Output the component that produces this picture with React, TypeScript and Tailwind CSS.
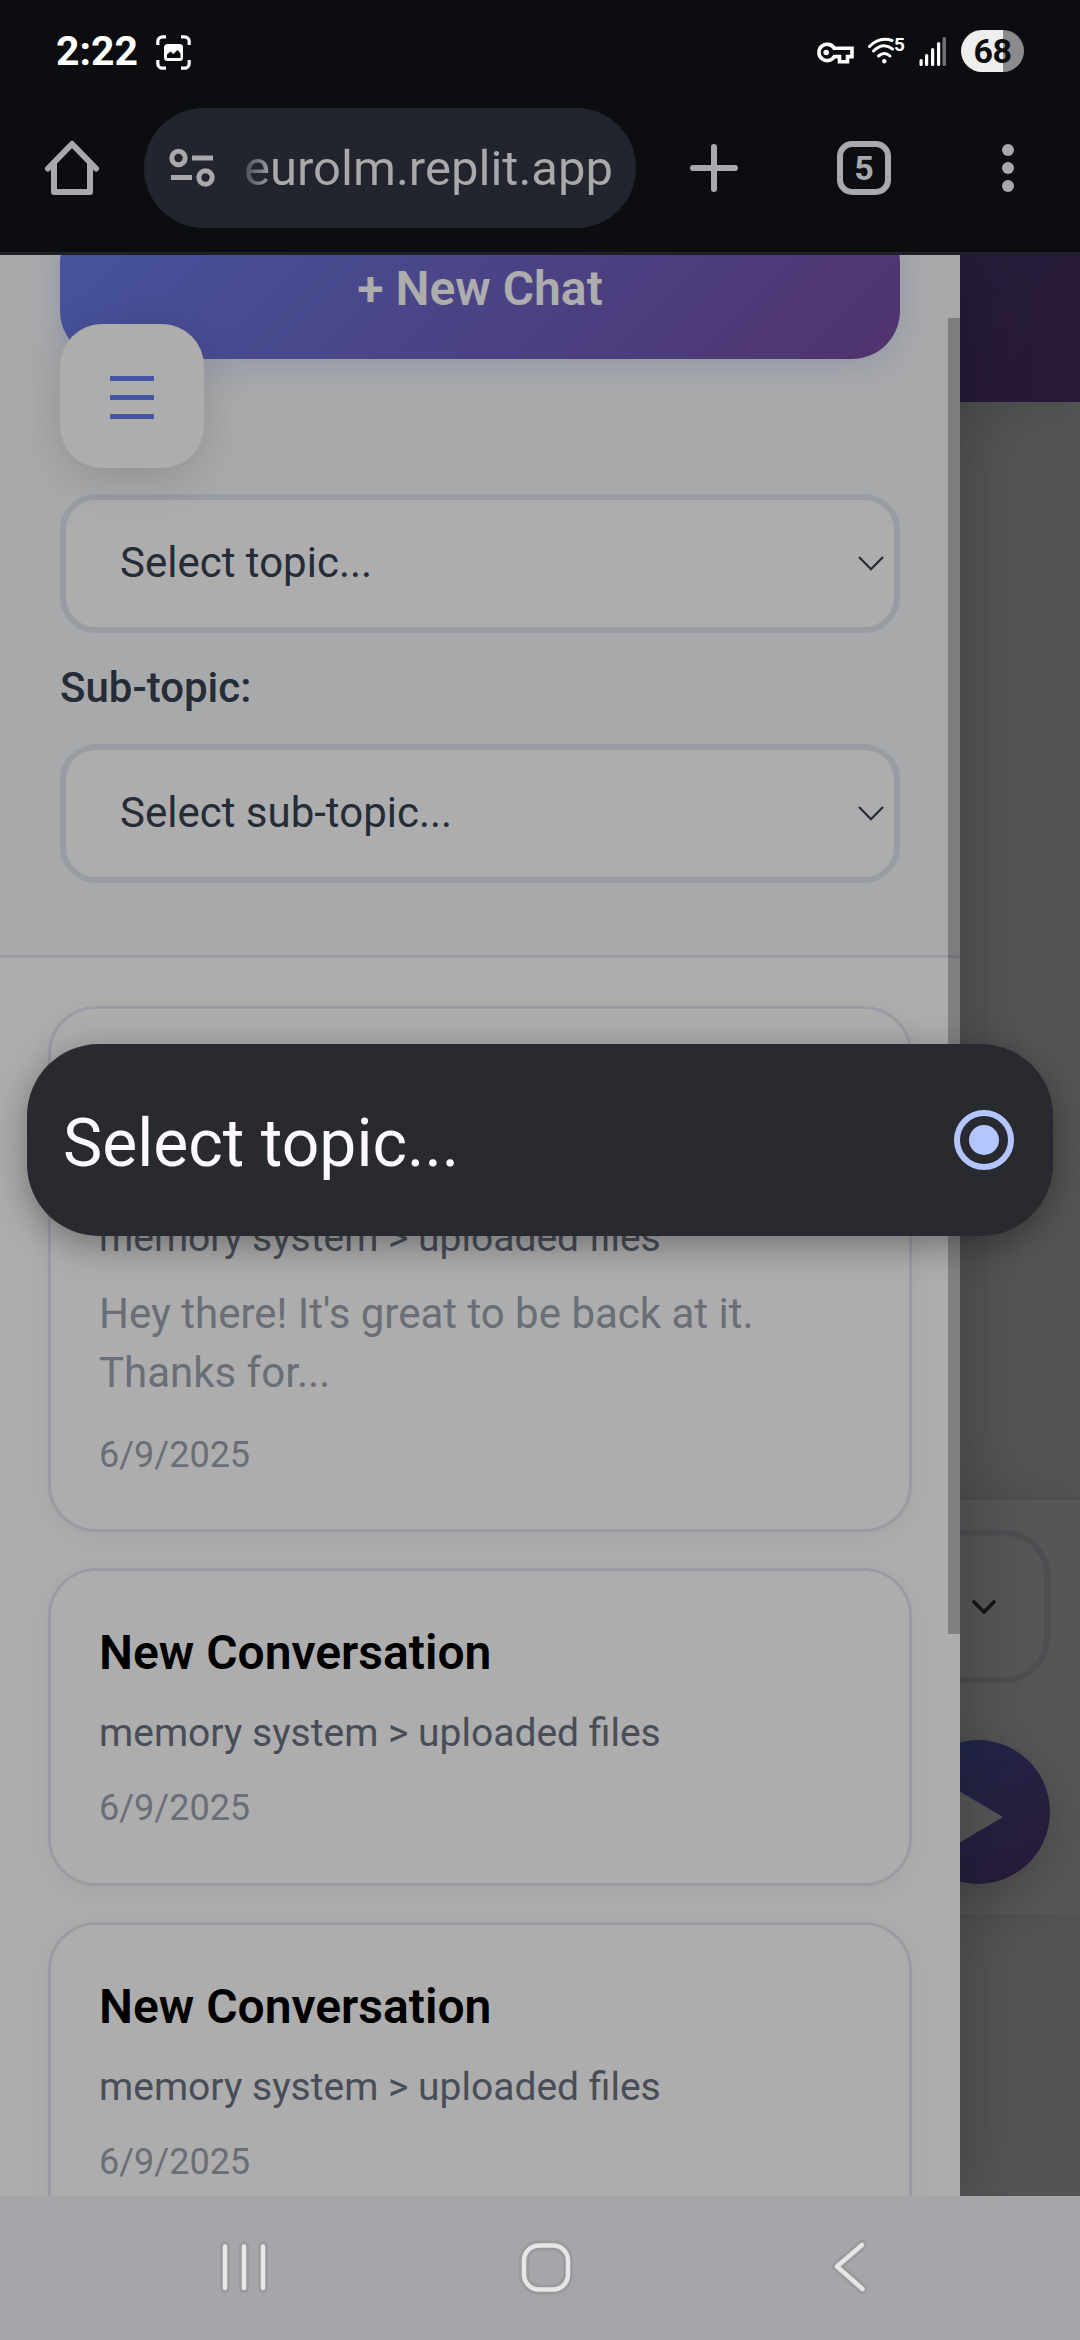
import React from "react";

function StatusBar() {
  return (
    <div className="flex h-[108px] items-start pl-[56px] pr-[56px] text-white">
      <div className="mt-[27px] w-[100px] text-[41px] leading-[48px] font-bold">2:22</div>
      <svg className="mt-[35px]" width="35" height="35" viewBox="0 0 35 35" fill="none">
        <path d="M1.800 10V6.500a4.700 4.700 0 0 1 4.700-4.700H10M25 1.800h3.500a4.700 4.700 0 0 1 4.700 4.700V10M33.200 25v3.500a4.700 4.700 0 0 1-4.700 4.700H25M10 33.200H6.500a4.700 4.700 0 0 1-4.700-4.700V25" stroke="#fff" strokeWidth="3.200" />
        <rect x="8" y="9" width="19" height="17" rx="3.500" fill="#fff" />
        <path d="M11 23v-3.500l3.500-3 3 2.500 4-4 3 3.500V23z" fill="#0b0d10" />
      </svg>
      <div className="ml-auto flex items-start">
        <svg className="mt-[42px]" width="38" height="22" viewBox="0 0 38 22" fill="none" stroke="#fff" strokeWidth="3.600">
          <path d="M18.200 6.300A8.200 8.200 0 1 0 18.200 14.600H23.500V19.800H31.500V14.600H36V6.300Z" />
          <circle cx="10.200" cy="10.500" r="2.800" fill="#fff" stroke="none" />
        </svg>
        <div className="relative ml-[13px] mt-[37px] h-[28px] w-[38px]">
          <svg width="38" height="28" viewBox="0 0 38 28" fill="none" stroke="#fff" strokeWidth="3" strokeLinecap="round">
            <path d="M2.500 9.500Q12.500 -0.800 25 3.500" />
            <path d="M6.500 14Q16 4.500 25.500 12" />
            <path d="M11.500 19Q17.500 14 23 19" />
            <circle cx="17.300" cy="24.200" r="2.200" fill="#fff" stroke="none" />
          </svg>
          <span className="absolute top-[-4px] left-[27px] text-[19px] leading-[24px] font-bold">5</span>
        </div>
        <svg className="ml-[14px] mt-[37px]" width="28" height="30" viewBox="0 0 28 30" fill="#fff">
          <rect x="0.500" y="22" width="3.200" height="7" rx="1.500" />
          <rect x="6" y="17" width="3.200" height="12" rx="1.500" />
          <rect x="12" y="11" width="3.200" height="18" rx="1.500" />
          <rect x="18" y="5" width="3.200" height="24" rx="1.500" />
          <rect x="23.500" y="0" width="3.500" height="29" rx="1.500" fill="#707173" />
        </svg>
        <div className="ml-[14px] mt-[30px] flex h-[42px] w-[63px] items-center justify-center rounded-full bg-[linear-gradient(90deg,#eeeeee_42px,#8b8b8d_42px)] text-[34px] leading-[42px] font-bold tracking-[-0.500px] text-[#0b0d10]">
          68
        </div>
      </div>
    </div>
  );
}

function BrowserBar() {
  return (
    <div className="flex h-[147px] items-start border-b-3 border-[#202126] text-[#a9a9ac]">
      <svg className="ml-[44px] mt-[32px]" width="56" height="56" viewBox="0 0 56 56" fill="none" stroke="currentColor" strokeWidth="6" strokeLinejoin="round" strokeLinecap="round">
        <path d="M4 28.500L28 4L52 28.500" />
        <path d="M10 24V52H46V24" />
      </svg>
      <div className="ml-[44px] flex h-[120px] w-[492px] items-center rounded-full bg-[#23252e]">
        <svg className="ml-[25px]" width="48" height="42" viewBox="0 0 48 42" fill="none" stroke="currentColor" strokeWidth="5">
          <circle cx="9.500" cy="11" r="6.700" />
          <path d="M23 11H44M2 30.500H23" />
          <circle cx="36.500" cy="30.500" r="6.700" />
        </svg>
        <div className="ml-[27px] mt-[2px] bg-[linear-gradient(90deg,#4a4c54_0px,#a9a9ac_30px)] bg-clip-text text-[49px] leading-[60px] text-transparent">
          eurolm.replit.app
        </div>
      </div>
      <svg className="ml-[54px] mt-[36px]" width="48" height="48" viewBox="0 0 48 48" stroke="currentColor" strokeWidth="6" strokeLinecap="round">
        <path d="M24 3V45M3 24H45" />
      </svg>
      <div className="ml-[99px] mt-[33px] flex h-[54px] w-[54px] items-center justify-center rounded-[15px] border-6 border-[#a9a9ac] text-[34px] leading-[42px] font-bold">
        5
      </div>
      <div className="ml-[111px] mt-[36px] flex flex-col gap-[6px]">
        <div className="size-[12px] rounded-full bg-[#a9a9ac]" />
        <div className="size-[12px] rounded-full bg-[#a9a9ac]" />
        <div className="size-[12px] rounded-full bg-[#a9a9ac]" />
      </div>
    </div>
  );
}

function Select({ label }: { label: string }) {
  return (
    <div className="flex h-[139px] items-center justify-between rounded-[36px] border-6 border-[#e2e8f0] bg-white pb-[2px] pl-[54px] pr-[9px] text-[42px] leading-[49px] text-[#374151]">
      <span>{label}</span>
      <svg width="28" height="18" viewBox="0 0 28 18" fill="none" stroke="#374151" strokeWidth="2.300">
        <path d="M2 3L14 15.200L26 3" />
      </svg>
    </div>
  );
}

function Card({ title, preview, height }: { title?: string; preview?: string; height: string }) {
  return (
    <div className={`${height} shrink-0 rounded-[48px] border-3 border-[#e2e8f0] bg-white p-[48px] shadow-[0_6px_24px_rgba(0,0,0,0.05)]`}>
      {title ? (
        <div className="text-[48px] leading-[67.2px] font-semibold text-black">{title}</div>
      ) : (
        <div className="h-[134.4px]" />
      )}
      <div className="mt-[20px] mb-[19px] text-[39px] leading-[55px] text-[#6b7280]">memory system &gt; uploaded files</div>
      {preview && <div className="mb-[24px] text-[42px] leading-[58.800px] text-[#9ca3af]">{preview}</div>}
      <div className="text-[36px] leading-[56px] text-[#9ca3af]">6/9/2025</div>
    </div>
  );
}

function ChatPage() {
  return (
    <div className="flex h-full flex-col bg-[#f8fafc]">
      <div className="h-[147px] bg-[linear-gradient(135deg,#667eea,#764ba2)] shadow-[0_12px_60px_rgba(0,0,0,0.1)]" />
      <div className="h-[1095px]" />
      <div className="flex h-[417px] flex-col items-end border-t-3 border-[#e2e8f0] bg-white px-[30px] pt-[30px] shadow-[0_-6px_60px_rgba(0,0,0,0.1)]">
        <div className="flex h-[153px] w-full items-center justify-end rounded-[45px] border-6 border-[#e2e8f0] pr-[46px]">
          <svg width="28" height="18" viewBox="0 0 28 18" fill="none" stroke="#374151" strokeWidth="3.800" strokeLinecap="round" strokeLinejoin="round">
            <path d="M4 4L14 14L24 4" />
          </svg>
        </div>
        <div className="mt-[57px] flex size-[144px] items-center justify-center rounded-full bg-[linear-gradient(135deg,#667eea,#764ba2)] shadow-[0_12px_48px_rgba(0,0,0,0.2)]">
          <svg className="mt-[9px] ml-[-19px]" width="68" height="80" viewBox="0 0 68 80" fill="#fff">
            <path d="M0 0L68 40L0 80Z" />
          </svg>
        </div>
      </div>
    </div>
  );
}

function Drawer() {
  return (
    <div className="absolute inset-y-0 left-0 w-[960px] overflow-hidden bg-white">
      <div className="flex h-[703px] flex-col border-b-3 border-[#e2e8f0] bg-[#f8fafc] px-[60px]">
        <div className="mt-[-40px] flex h-[144px] shrink-0 items-center justify-center rounded-[48px] bg-[linear-gradient(135deg,#667eea,#764ba2)] pt-[3px] text-[48px] leading-[56px] font-semibold text-white shadow-[0_6px_36px_rgba(102,126,234,0.220)]">
          + New Chat
        </div>
        <div className="h-[135px] shrink-0" />
        <Select label="Select topic..." />
        <div className="mt-[25px] mb-[27px] text-[42px] leading-[59px] font-medium text-[#374151]">Sub-topic:</div>
        <Select label="Select sub-topic..." />
      </div>
      <div className="flex flex-col gap-[36px] px-[48px] pt-[48px]">
        <Card height="h-[526px]" preview="Hey there! It's great to be back at it. Thanks for..." />
        <Card height="h-[318px]" title="New Conversation" />
        <Card height="h-[318px]" title="New Conversation" />
      </div>
      <div className="absolute top-[63px] right-0 h-[1316px] w-[12px] bg-black/26" />
      <div className="absolute top-[69px] left-[60px] flex size-[144px] flex-col items-center justify-center gap-[14px] rounded-[42px] bg-white pt-[3px] shadow-[0_12px_48px_rgba(0,0,0,0.150)]">
        <div className="h-[5px] w-[44px] bg-[#667eea]" />
        <div className="h-[5px] w-[44px] bg-[#667eea]" />
        <div className="h-[5px] w-[44px] bg-[#667eea]" />
      </div>
    </div>
  );
}

function TopicPopup() {
  return (
    <div className="absolute top-[789px] left-[27px] flex h-[192px] w-[1026px] items-center justify-between rounded-[72px] bg-[#292a2f] pr-[39px] pl-[36px] shadow-[0_9px_36px_rgba(0,0,0,0.350)]">
      <div className="mt-[7px] text-[66px] leading-[77px] text-[#fdf9ff]">Select topic...</div>
      <div className="flex size-[60px] items-center justify-center rounded-full border-6 border-[#b4c6ff]">
        <div className="size-[30px] rounded-full bg-[#b4c6ff]" />
      </div>
    </div>
  );
}

function NavBar() {
  const shapes = (
    <>
      <path d="M225 50.500V92M244 50.500V92M263 50.500V92" />
      <rect x="524" y="49.500" width="44" height="44" rx="15" />
      <path d="M862 49L837 70.500L862.500 93" />
    </>
  );
  return (
    <div className="h-[144px] bg-[#a4a6aa]">
      <svg width="1080" height="144" viewBox="0 0 1080 144" fill="none" strokeLinecap="round" strokeLinejoin="round">
        <g stroke="#999a9d" strokeWidth="10">{shapes}</g>
        <g stroke="#e6e6e6" strokeWidth="4.500">{shapes}</g>
      </svg>
    </div>
  );
}

export default function App() {
  return (
    <div className="flex h-[2340px] w-[1080px] flex-col overflow-hidden bg-[#0b0d10] font-[Roboto,sans-serif]">
      <StatusBar />
      <BrowserBar />
      <div className="relative h-[1941px] overflow-hidden">
        <ChatPage />
        <div className="absolute inset-0 bg-black/50" />
        <div className="absolute inset-y-0 left-0 w-[960px] shadow-[12px_0_60px_rgba(0,0,0,0.200)]" />
        <Drawer />
        <div className="absolute inset-0 bg-black/32" />
        <TopicPopup />
      </div>
      <NavBar />
    </div>
  );
}
